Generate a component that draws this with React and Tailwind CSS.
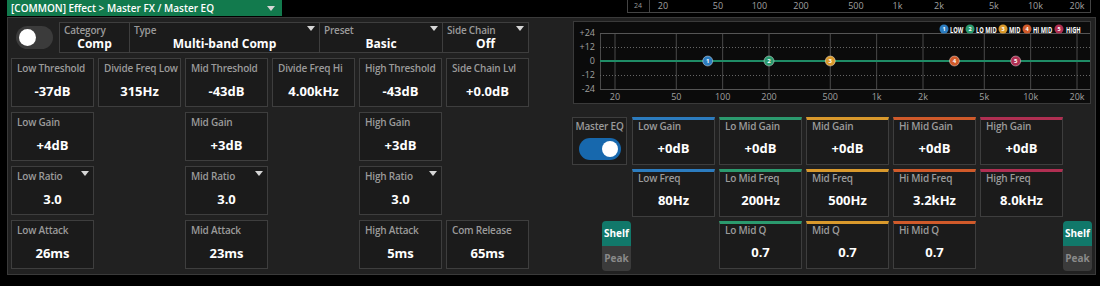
import React from "react";

const BANDS = {
  low: "#2c7cbf",
  lomid: "#2b9a6e",
  mid: "#d9992c",
  himid: "#d05a2a",
  high: "#b02f52",
};

const FREQS = [
  ["20", 20],
  ["50", 50],
  ["100", 100],
  ["200", 200],
  ["500", 500],
  ["1k", 1000],
  ["2k", 2000],
  ["5k", 5000],
  ["10k", 10000],
  ["20k", 20000],
];

const fx = (f, x0, w) => x0 + (Math.log10(f / 20) / 3) * w;

const Tri = ({ className = "" }) => (
  <svg width="8" height="5" viewBox="0 0 8 5" className={className}>
    <polygon points="0,0 8,0 4,5" fill="#d6d6d6" />
  </svg>
);

function Cell({ label, value, drop }) {
  return (
    <div className="relative flex flex-col border border-[#3e3e3e] bg-[#1b1b1b]">
      <div className="px-[5px] pt-[3px] text-[10px] leading-[13px] font-semibold tracking-[-0.2px] text-[#9a9a9a] whitespace-nowrap">
        {label}
      </div>
      <div className="flex flex-1 items-center justify-center pt-[3px] text-[13px] font-bold text-white">
        {value}
      </div>
      {drop && <Tri className="absolute top-[4px] right-[4px]" />}
    </div>
  );
}

function EqCell({ label, value, bar }) {
  return (
    <div className={`flex w-[83px] flex-col border border-[#3e3e3e] border-t-[3px] bg-[#1b1b1b] ${bar}`}>
      <div className="px-[5px] text-[10px] leading-[13px] font-semibold tracking-[-0.2px] text-[#9a9a9a] whitespace-nowrap">
        {label}
      </div>
      <div className="flex flex-1 items-center justify-center text-[13px] font-bold text-white">
        {value}
      </div>
    </div>
  );
}

function ShelfPeak({ className = "" }) {
  return (
    <div className={`flex h-[50px] w-[29px] flex-col overflow-hidden rounded-[4px] ${className}`}>
      <div className="flex h-[25px] items-center justify-center bg-[#11786a] text-[10px] font-bold text-white">
        Shelf
      </div>
      <div className="flex h-[25px] items-center justify-center bg-[#3b3b3b] text-[10px] font-bold text-[#8a8a8a]">
        Peak
      </div>
    </div>
  );
}

function TopHead({ label, value, drop, className = "" }) {
  return (
    <div className={`relative flex flex-col ${className}`}>
      <div className="px-[4px] pt-[1px] text-[10px] leading-[12px] font-semibold tracking-[-0.2px] text-[#9a9a9a]">
        {label}
      </div>
      <div className="text-center text-[12px] leading-[16px] font-bold text-white">{value}</div>
      {drop && <Tri className="absolute top-[3px] right-[4px]" />}
    </div>
  );
}

const compRows = [
  [
    ["Low Threshold", "-37dB"],
    ["Divide Freq Low", "315Hz"],
    ["Mid Threshold", "-43dB"],
    ["Divide Freq Hi", "4.00kHz"],
    ["High Threshold", "-43dB"],
    ["Side Chain Lvl", "+0.0dB"],
  ],
  [["Low Gain", "+4dB"], null, ["Mid Gain", "+3dB"], null, ["High Gain", "+3dB"], null],
  [["Low Ratio", "3.0", true], null, ["Mid Ratio", "3.0", true], null, ["High Ratio", "3.0", true], null],
  [["Low Attack", "26ms"], null, ["Mid Attack", "23ms"], null, ["High Attack", "5ms"], ["Com Release", "65ms"]],
];

function TopFragment() {
  return (
    <svg width="540" height="17" className="block">
      <line x1="67.5" y1="0" x2="67.5" y2="13" stroke="#444" />
      <line x1="89.5" y1="0" x2="89.5" y2="13" stroke="#444" />
      <line x1="530.5" y1="0" x2="530.5" y2="13" stroke="#444" />
      <line x1="67" y1="12.5" x2="531" y2="12.5" stroke="#444" />
      <text x="78" y="8" fontSize="7" fill="#9a9a9a" textAnchor="middle">24</text>
      {FREQS.map(([t, f]) => (
        <text key={t} x={fx(f, 103, 414)} y="9" fontSize="9" fill="#a0a0a0" textAnchor="middle">
          {t}
        </text>
      ))}
    </svg>
  );
}

function EqChart() {
  const x0 = 42;
  const w = 462;
  const nodes = [
    [80, BANDS.low, "1"],
    [200, BANDS.lomid, "2"],
    [500, BANDS.mid, "3"],
    [3200, BANDS.himid, "4"],
    [8000, BANDS.high, "5"],
  ];
  const legend = [
    [371, 377, "LOW", BANDS.low, "1"],
    [397, 403, "LO MID", BANDS.lomid, "2"],
    [430, 436, "MID", BANDS.mid, "3"],
    [454, 460, "HI MID", BANDS.himid, "4"],
    [486, 493, "HIGH", BANDS.high, "5"],
  ];
  return (
    <svg width="518" height="83" className="block">
      <rect x="0.5" y="0.5" width="517" height="82" fill="#0b0b0b" stroke="#3a3a3a" />
      {[["+24", 12], ["+12", 26], ["0", 40], ["-12", 54], ["-24", 68]].map(([t, y]) => (
        <text key={t} x="22" y={y + 3} fontSize="9" fill="#a0a0a0" textAnchor="end">
          {t}
        </text>
      ))}
      <line x1="27.5" y1="12" x2="27.5" y2="68" stroke="#4a4a4a" />
      {FREQS.map(([t, f]) => (
        <line key={t} x1={fx(f, x0, w)} y1="12" x2={fx(f, x0, w)} y2="68" stroke="#4a4a4a" />
      ))}
      <line x1="27" y1="12.5" x2="517" y2="12.5" stroke="#555" />
      <line x1="27" y1="68.5" x2="517" y2="68.5" stroke="#555" />
      <line x1="27" y1="26.5" x2="517" y2="26.5" stroke="#666" strokeDasharray="1 2" />
      <line x1="27" y1="54.5" x2="517" y2="54.5" stroke="#666" strokeDasharray="1 2" />
      <line x1="27" y1="40" x2="517" y2="40" stroke="#1f8c66" strokeWidth="2" />
      {FREQS.map(([t, f]) => (
        <text key={t} x={fx(f, x0, w)} y="79" fontSize="9" fill="#a0a0a0" textAnchor="middle">
          {t}
        </text>
      ))}
      {nodes.map(([f, c, n]) => (
        <g key={n}>
          <circle cx={fx(f, x0, w)} cy="40" r="5" fill={c} stroke="#ffffff80" strokeWidth="0.8" />
          <text x={fx(f, x0, w)} y="42.2" fontSize="6" fill="#fff" textAnchor="middle" fontWeight="700">
            {n}
          </text>
        </g>
      ))}
      {legend.map(([cx, tx, t, c, n]) => (
        <g key={t}>
          <circle cx={cx} cy="8" r="4.5" fill={c} />
          <text x={cx} y="10" fontSize="5.5" fill="#fff" textAnchor="middle" fontWeight="700">
            {n}
          </text>
          <text
            transform={`translate(${tx} 11.5) scale(0.6 1)`}
            fontSize="9.5"
            fill="#fff"
            fontWeight="700"
          >
            {t}
          </text>
        </g>
      ))}
    </svg>
  );
}

export default function App() {
  return (
    <div className="h-[286px] w-[1100px] overflow-hidden bg-black font-['Open_Sans',sans-serif]">
      <div className="flex h-[17px]">
        <div className="ml-[7px] flex h-[16px] w-[275px] items-center justify-between bg-[#127a4d] pl-[4px] pr-[7px]">
          <span className="text-[10px] leading-[16px] font-semibold text-white whitespace-nowrap">
            [COMMON] Effect &gt; Master FX / Master EQ
          </span>
          <Tri />
        </div>
        <div className="ml-auto">
          <TopFragment />
        </div>
      </div>

      <div className="ml-[7px] flex h-[258px] w-[1089px] border border-[#3a3a3a] bg-[#212121]">
        <div className="w-[521px] pl-[3px] pt-[4px]">
          <div className="flex h-[31px] items-center">
            <div className="ml-[5px] flex h-[23px] w-[37px] items-center rounded-full bg-[#3b3b3b] px-[3px]">
              <div className="h-[17px] w-[17px] rounded-full bg-white" />
            </div>
            <div className="ml-[6px] flex h-[31px] border border-[#3e3e3e] bg-[#1b1b1b] divide-x divide-[#3e3e3e]">
              <TopHead label="Category" value="Comp" className="w-[70px]" />
              <TopHead label="Type" value="Multi-band Comp" drop className="w-[190px]" />
              <TopHead label="Preset" value="Basic" drop className="w-[123px]" />
              <TopHead label="Side Chain" value="Off" drop className="w-[85px]" />
            </div>
          </div>
          <div className="mt-[5px] grid grid-cols-[repeat(6,83px)] grid-rows-[repeat(4,49px)] gap-x-[4px] gap-y-[5px]">
            {compRows.flatMap((row, r) =>
              row.map((c, i) =>
                c ? (
                  <Cell key={`${r}-${i}`} label={c[0]} value={c[1]} drop={c[2]} />
                ) : (
                  <div key={`${r}-${i}`} />
                )
              )
            )}
          </div>
        </div>

        <div className="ml-[43px] pt-[3px]">
          <div className="ml-[1px]">
            <EqChart />
          </div>
          <div className="mt-[13px] grid grid-cols-[60px_87px_87px_87px_87px_83px_30px] grid-rows-[repeat(3,48px)] gap-y-[4px]">
            <div className="flex w-[55px] flex-col items-center border border-[#3e3e3e] bg-[#1b1b1b]">
              <div className="pt-[2px] text-[10px] leading-[13px] font-semibold tracking-[-0.2px] text-[#9a9a9a] whitespace-nowrap">
                Master EQ
              </div>
              <div className="mt-[5px] flex h-[22px] w-[42px] items-center justify-end rounded-full bg-[#1768ad] px-[3px]">
                <div className="h-[16px] w-[16px] rounded-full bg-white" />
              </div>
            </div>
            <EqCell label="Low Gain" value="+0dB" bar="border-t-[#2c7cbf]" />
            <EqCell label="Lo Mid Gain" value="+0dB" bar="border-t-[#2b9a6e]" />
            <EqCell label="Mid Gain" value="+0dB" bar="border-t-[#d9992c]" />
            <EqCell label="Hi Mid Gain" value="+0dB" bar="border-t-[#d05a2a]" />
            <EqCell label="High Gain" value="+0dB" bar="border-t-[#b02f52]" />
            <div />

            <div />
            <EqCell label="Low Freq" value="80Hz" bar="border-t-[#2c7cbf]" />
            <EqCell label="Lo Mid Freq" value="200Hz" bar="border-t-[#2b9a6e]" />
            <EqCell label="Mid Freq" value="500Hz" bar="border-t-[#d9992c]" />
            <EqCell label="Hi Mid Freq" value="3.2kHz" bar="border-t-[#d05a2a]" />
            <EqCell label="High Freq" value="8.0kHz" bar="border-t-[#b02f52]" />
            <div />

            <ShelfPeak className="mr-[1px] justify-self-end" />
            <div />
            <EqCell label="Lo Mid Q" value="0.7" bar="border-t-[#2b9a6e]" />
            <EqCell label="Mid Q" value="0.7" bar="border-t-[#d9992c]" />
            <EqCell label="Hi Mid Q" value="0.7" bar="border-t-[#d05a2a]" />
            <div />
            <ShelfPeak />
          </div>
        </div>
      </div>
    </div>
  );
}
